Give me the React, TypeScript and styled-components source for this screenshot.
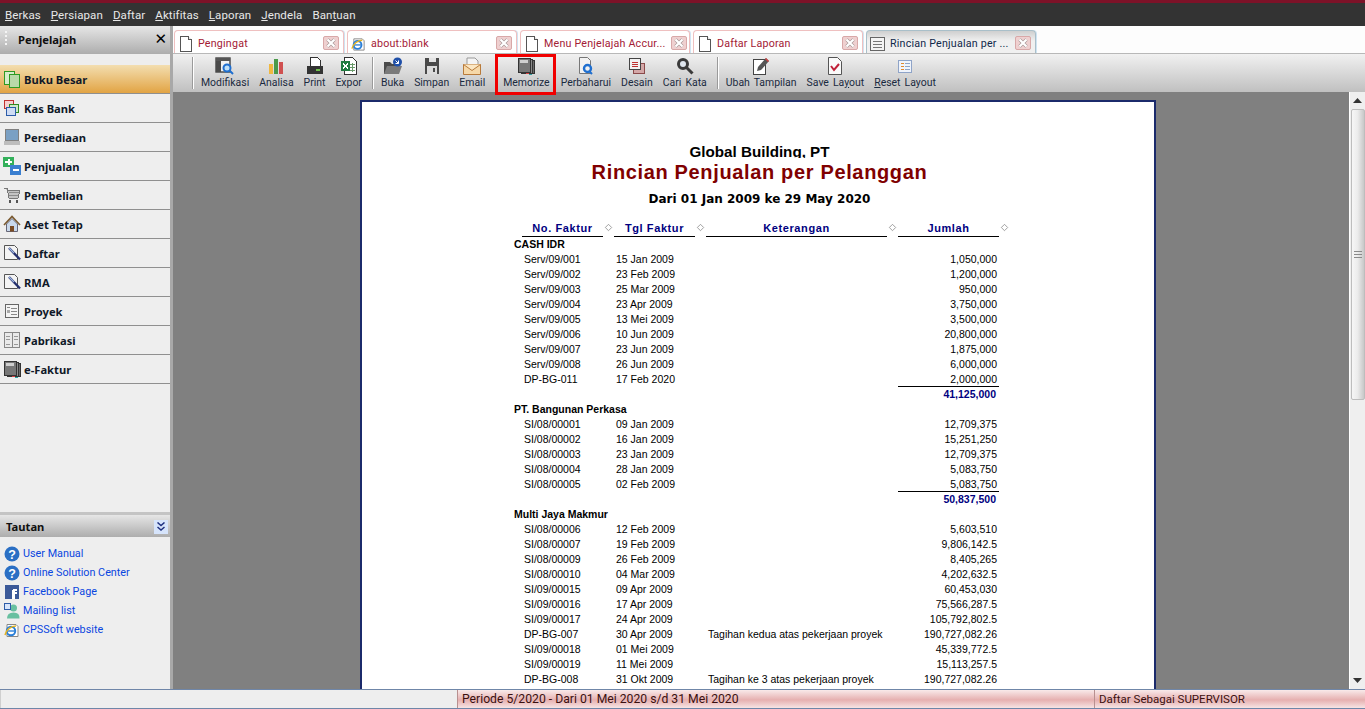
import React from 'react';
import styled, { createGlobalStyle } from 'styled-components';

const uiFont = `Roboto, "Noto Sans", sans-serif`;
const navFont = `"Noto Sans", "DejaVu Sans", sans-serif`;
const dateFont = `"DejaVu Sans", "Noto Sans", sans-serif`;
const reportFont = `"Liberation Sans", Arial, sans-serif`;

const GlobalStyle = createGlobalStyle`
    html, body, #root {
        margin: 0;
        height: 100%;
        overflow: hidden;
    }
    body {
        font-family: ${uiFont};
        font-size: 11px;
        background: #808080;
    }
`;

const AppFrame = styled.div`
    height: 709px;
    display: flex;
    flex-direction: column;
`;

const MenuBar = styled.div`
    height: 23px;
    flex: none;
    background: #333333;
    border-top: 3px solid #7d1228;
    display: flex;
    align-items: center;
    gap: 10px;
    padding-left: 5px;
`;

const MenuItem = styled.span`
    color: #e8e8e8;
    font-size: 11.5px;
    letter-spacing: 0.1px;
`;

const Body = styled.div`
    flex: 1;
    min-height: 0;
    display: flex;
`;

const Sidebar = styled.aside`
    width: 170px;
    flex: none;
    background: #eeeeee;
    border-right: 3px solid #a8a8a8;
    display: flex;
    flex-direction: column;
`;

const PanelHeader = styled.div`
    height: 28px;
    box-sizing: border-box;
    flex: none;
    background: linear-gradient(#e6e6e6, #adadad);
    display: flex;
    align-items: center;
    justify-content: space-between;
    padding: 0 3px 2px 5px;
    font-family: ${navFont};
    font-weight: bold;
    font-size: 11.2px;
    color: #101010;
`;

const Grip = styled.span`
    width: 2px;
    height: 16px;
    margin-right: 11px;
    background: repeating-linear-gradient(#f4f4f4 0 2px, transparent 2px 4px);
`;

const HeaderTitle = styled.span`
    flex: 1;
`;

const CloseGlyph = styled.span`
    font-size: 15px;
    font-family: "DejaVu Sans", sans-serif;
    font-weight: normal;
    line-height: 1;
    color: #000;
`;

const NavList = styled.nav`
    padding-top: 11px;
    flex: 1;
`;

const NavItem = styled.div<{ $active?: boolean }>`
    height: 28px;
    border-bottom: 1px solid #8f8f8f;
    background: ${(p) => (p.$active ? 'linear-gradient(#f3deb0, #e2a444)' : 'transparent')};
    display: flex;
    align-items: center;
    padding-left: 3px;
    gap: 3px;
    font-family: ${navFont};
    font-weight: bold;
    font-size: 11.2px;
    color: #101828;
`;

const IconSlot = styled.span`
    width: 18px;
    height: 18px;
    flex: none;
    display: flex;
    align-items: center;
    justify-content: center;
`;

const LinksHeader = styled(PanelHeader)`
    height: 25px;
    padding: 1px 2px 0 6px;
    border-top: 3px solid #c4c4c4;
`;

const CollapseButton = styled.span`
    width: 14px;
    height: 14px;
    background: #d6e4fb;
    display: flex;
    align-items: center;
    justify-content: center;
`;

const LinkList = styled.div`
    height: 145px;
    padding: 7px 0 0 3px;
    display: flex;
    flex-direction: column;
`;

const LinkRow = styled.a`
    height: 19px;
    display: flex;
    align-items: center;
    gap: 2px;
    font-size: 10.8px;
    color: #0a46e0;
`;

const Workspace = styled.main`
    flex: 1;
    min-width: 0;
    display: flex;
    flex-direction: column;
`;

const TabStrip = styled.div`
    height: 28px;
    flex: none;
    background: #fdfdfd;
    box-sizing: border-box;
    border-bottom: 1px solid #b8b8b8;
    padding: 4px 0 0 1px;
    display: flex;
    gap: 3px;
`;

const Tab = styled.div<{ $active?: boolean }>`
    width: 170px;
    box-sizing: border-box;
    border: 1px solid ${(p) => (p.$active ? '#a9bfc9' : '#efc0c0')};
    border-bottom: none;
    border-radius: 4px 4px 0 0;
    background: ${(p) => (p.$active ? 'linear-gradient(#cfcfcf, #f0f0f0 45%)' : '#ffffff')};
    box-shadow: 1px 0 0 #cfe3f2;
    display: flex;
    align-items: center;
    padding: 3px 4px 0 3px;
    gap: 5px;
`;

const TabIcon = styled.span`
    width: 15px;
    flex: none;
    display: flex;
    justify-content: center;
`;

const TabLabel = styled.span<{ $active?: boolean }>`
    flex: 1;
    font-size: 10.7px;
    letter-spacing: 0.2px;
    white-space: nowrap;
    color: ${(p) => (p.$active ? '#10284a' : '#a32035')};
`;

const TabClose = styled.span`
    width: 16px;
    height: 14px;
    flex: none;
    margin-top: -2px;
    box-sizing: border-box;
    border: 1px solid #d8a8a8;
    border-radius: 2px;
    background: #efd0d0;
    display: flex;
    align-items: center;
    justify-content: center;
`;

const Toolbar = styled.div`
    height: 38px;
    flex: none;
    background: linear-gradient(#f1f1f1, #c0c0c0);
    display: flex;
    align-items: flex-start;
    padding-left: 14px;
    position: relative;
    z-index: 1;
`;

const ToolSeparator = styled.span`
    width: 1px;
    height: 32px;
    margin: 3px 3px 0 5px;
    background: #9a9a9a;
    box-shadow: 1px 0 0 #fff;
`;

const ToolButton = styled.div<{ $marked?: boolean }>`
    height: ${(p) => (p.$marked ? '41px' : '38px')};
    box-sizing: border-box;
    padding: ${(p) => (p.$marked ? '0 3px 0 5px' : '3px 5px 0')};
    margin-left: ${(p) => (p.$marked ? '5px' : '0')};
    border: ${(p) => (p.$marked ? '3px solid #f00000' : 'none')};
    display: flex;
    flex-direction: column;
    align-items: center;
    white-space: nowrap;
    font-size: 10.45px;
    word-spacing: 1.5px;
    color: #1a2a40;
`;

const ToolIcon = styled.span`
    height: 18px;
    display: flex;
    align-items: center;
    justify-content: center;
`;

const ToolLabel = styled.span`
    line-height: 15px;
`;

const ReportArea = styled.div`
    flex: 1;
    min-height: 0;
    display: flex;
    background: #808080;
`;

const ReportScroll = styled.div`
    flex: 1;
    min-width: 0;
    overflow: hidden;
    padding: 8px 0 0 187px;
`;

const Page = styled.div`
    width: 796px;
    height: 700px;
    box-sizing: border-box;
    background: #ffffff;
    border: 2px solid #1b2a6b;
    padding: 41px 0 0 3px;
    font-family: ${reportFont};
    font-size: 10.5px;
    color: #000;
`;

const CompanyName = styled.div`
    height: 15px;
    overflow: hidden;
    text-align: center;
    font-size: 15.2px;
    line-height: 17px;
    font-weight: bold;
`;

const ReportTitle = styled.div`
    height: 28px;
    text-align: center;
    font-size: 20px;
    line-height: 28px;
    font-weight: bold;
    letter-spacing: 0.65px;
    color: #800000;
`;

const DateRange = styled.div`
    margin-top: 5px;
    height: 16px;
    text-align: center;
    font-family: ${dateFont};
    font-size: 12px;
    line-height: 16px;
    font-weight: bold;
`;

const ReportTable = styled.div`
    margin: 14px 0 0 157px;
    width: 500px;
`;

const HeaderRow = styled.div`
    display: grid;
    grid-template-columns: 92px 92px 192px 112px;
    height: 16px;
`;

const HeaderCell = styled.div`
    position: relative;
    margin-right: 11px;
    border-bottom: 1px solid #000;
    text-align: center;
    font-weight: bold;
    font-size: 11px;
    line-height: 14px;
    letter-spacing: 0.6px;
    color: #000080;
`;

const SortMark = styled.span`
    position: absolute;
    right: -9px;
    top: 3px;
    width: 5px;
    height: 5px;
    border: 1px solid #8a8a8a;
    transform: rotate(45deg) scale(0.75);
`;

const Row = styled.div`
    display: grid;
    grid-template-columns: 92px 92px 192px 101px;
    height: 15px;
    line-height: 15px;
    white-space: nowrap;
`;

const GroupRow = styled.div`
    height: 15px;
    line-height: 15px;
    margin-left: -8px;
    font-weight: bold;
`;

const Cell = styled.div`
    padding-left: 2px;
    margin-right: 9px;
    overflow: hidden;
`;

const Amount = styled.div`
    text-align: right;
    padding-right: 2px;
`;

const TotalAmount = styled(Amount)`
    grid-column: 4;
    padding-right: 3px;
    box-shadow: 0 -1px 0 #000;
    font-weight: bold;
    color: #000080;
`;

const Scrollbar = styled.div`
    width: 15px;
    flex: none;
    background: #efefef;
    border-left: 1px solid #ffffff;
    display: flex;
    flex-direction: column;
    align-items: center;
`;

const ScrollButton = styled.span<{ $down?: boolean }>`
    height: 17px;
    flex: none;
    display: flex;
    align-items: center;
    justify-content: center;
    order: ${(p) => (p.$down ? 3 : 0)};
`;

const ScrollThumb = styled.div`
    width: 14px;
    height: 291px;
    flex: none;
    box-sizing: border-box;
    border: 1px solid #bdbdbd;
    border-radius: 2px;
    background: linear-gradient(90deg, #f6f6f6, #ececec 45%, #c8c8c8);
    display: flex;
    align-items: center;
    justify-content: center;
`;

const ScrollTrack = styled.div`
    flex: 1;
    order: 2;
`;

const ThumbGrip = styled.span`
    width: 8px;
    height: 8px;
    background: repeating-linear-gradient(#8a8a8a 0 1px, transparent 1px 3px);
`;

const StatusBar = styled.footer`
    height: 20px;
    flex: none;
    box-sizing: border-box;
    border-top: 1px solid #6f86a8;
    border-bottom: 1px solid #6f86a8;
    display: grid;
    grid-template-columns: 457px 637px 1fr;
    line-height: 18px;
    color: #3a1010;
`;

const StatusCell = styled.div<{ $plain?: boolean; $small?: boolean }>`
    padding-left: 4px;
    white-space: nowrap;
    font-size: ${(p) => (p.$small ? '11.5px' : '12.2px')};
    background: ${(p) => (p.$plain ? '#eeeeee' : 'linear-gradient(#f9eaea, #e6b0b0 55%, #f7e4e4)')};
    border-left: 1px solid ${(p) => (p.$plain ? '#cfcfcf' : '#b89090')};
`;

const Svg: React.FC<{ w?: number; h?: number; children: React.ReactNode }> = ({ w = 18, h = 18, children }) => (
    <svg width={w} height={h} viewBox={`0 0 ${w} ${h}`} shapeRendering="crispEdges">
        {children}
    </svg>
);

const BlankDoc = () => (
    <Svg w={14} h={17}>
        <path d="M1.500 1.500h8l3 3v12h-11z" fill="#fff" stroke="#555" />
        <path d="M9.500 1.500v3h3" fill="#e8e8e8" stroke="#555" />
    </Svg>
);

const IeIcon = () => (
    <svg width="16" height="16" viewBox="0 0 16 16">
        <path d="M3 2.500h9l2 2v10H3z" fill="#fff" stroke="#888" />
        <circle cx="7" cy="9" r="4.200" fill="none" stroke="#2a7fd8" strokeWidth="2" />
        <path d="M3.500 9h7" stroke="#2a7fd8" strokeWidth="1.400" />
        <path d="M1 13C2 8 7 4 12 4" fill="none" stroke="#e6b422" strokeWidth="1.500" />
    </svg>
);

const ListDoc = () => (
    <Svg w={15} h={14}>
        <rect x="0.500" y="0.500" width="14" height="13" fill="#f4f4f4" stroke="#666" />
        <path d="M3 4.500h9M3 7.500h9M3 10.500h9" stroke="#777" />
    </Svg>
);

const PagesIcon = () => (
    <Svg>
        <rect x="1.500" y="1.500" width="10" height="13" fill="#d6eccb" stroke="#2e9a22" strokeWidth="1.200" />
        <rect x="6.500" y="4.500" width="10" height="13" fill="#b9d9a8" stroke="#2e9a22" strokeWidth="1.200" />
    </Svg>
);

const BankIcon = () => (
    <Svg>
        <rect x="1.500" y="1.500" width="9" height="8" fill="#f6d0d0" stroke="#c03030" />
        <rect x="6.500" y="5.500" width="9" height="8" fill="#cfe8c8" stroke="#2e8a22" />
        <rect x="3.500" y="8.500" width="9" height="8" fill="#cfdcf4" stroke="#2c5ca8" />
    </Svg>
);

const LaptopIcon = () => (
    <Svg>
        <rect x="2.500" y="1.500" width="13" height="11" fill="#7aa0c4" stroke="#808080" />
        <rect x="1" y="13" width="16" height="4" fill="#bdbdbd" />
    </Svg>
);

const PlusMinusIcon = () => (
    <Svg>
        <rect x="0" y="0" width="11" height="10" fill="#33b05a" />
        <path d="M2 4h7v2H2zM4.500 2h2v6h-2z" fill="#fff" />
        <rect x="7" y="8" width="11" height="10" fill="#3a7fd0" />
        <rect x="10" y="12" width="6" height="2" fill="#fff" />
    </Svg>
);

const CartIcon = () => (
    <Svg>
        <path d="M1 2h3l2 10h9l2-8H4" fill="#c4c4c4" stroke="#777" />
        <path d="M6 6h10M6 9h9" stroke="#8c8c8c" />
        <rect x="6" y="14" width="2" height="3" fill="#555" />
        <rect x="13" y="14" width="2" height="3" fill="#555" />
    </Svg>
);

const HouseIcon = () => (
    <svg width="18" height="18" viewBox="0 0 18 18">
        <path d="M3.500 9v7.500h11V9L9 3.500z" fill="#c9d8ea" stroke="#667" />
        <path d="M1 10l8-8.500 8 8.500" fill="none" stroke="#7a5a30" strokeWidth="1.600" />
        <rect x="7" y="11" width="4" height="5.500" fill="#7a4a22" />
    </svg>
);

const PenDocIcon = () => (
    <svg width="18" height="18" viewBox="0 0 18 18">
        <path d="M1.500 1.500h10l3 3v11h-13z" fill="#f4f4f4" stroke="#555" />
        <path d="M6 4l11 11.500" stroke="#24306e" strokeWidth="2.400" />
        <path d="M6 4l5 5" stroke="#9fb6e0" strokeWidth="1.200" />
    </svg>
);

const CardIcon = () => (
    <Svg>
        <rect x="2.500" y="2.500" width="13" height="13" fill="#f4f4f4" stroke="#666" />
        <rect x="4" y="8" width="3" height="3" fill="#aaa" />
        <path d="M8 6h6M8 9h6M8 12h6" stroke="#888" />
        <path d="M4 5h3" stroke="#888" />
    </Svg>
);

const BookIcon = () => (
    <Svg>
        <rect x="1.500" y="1.500" width="15" height="15" fill="#eaeaea" stroke="#888" />
        <path d="M9 1.500v15" stroke="#888" />
        <path d="M3 5h4M3 8h4M3 13h4M11 5h4M11 8h4M11 13h4" stroke="#999" />
    </Svg>
);

const StackIcon: React.FC = () => (
    <Svg>
        <rect x="7" y="3" width="10" height="13" fill="#6a6a6a" stroke="#333" />
        <rect x="4" y="2" width="11" height="14" fill="#8a8a8a" stroke="#333" />
        <rect x="1" y="1" width="12" height="14" fill="#777" stroke="#333" />
        <rect x="3" y="3" width="8" height="3" fill="#cfcfcf" />
        <path d="M9 16h3" stroke="#d04040" />
        <path d="M12 17h3" stroke="#30a0a0" />
    </Svg>
);

const HelpIcon = () => (
    <svg width="16" height="16" viewBox="0 0 16 16">
        <circle cx="8" cy="8" r="7.500" fill="#2a6fc4" />
        <text x="8" y="12.500" textAnchor="middle" fontFamily="Liberation Sans" fontWeight="bold" fontSize="12.500" fill="#fff">?</text>
    </svg>
);

const FacebookIcon = () => (
    <Svg w={16} h={16}>
        <rect x="1" y="1" width="14" height="14" fill="#3b5998" />
        <path d="M8 15V7.500q0-3 3-3h2v2h-1.500q-1 0-1 1V8h2.500v2H10.500v5z" fill="#fff" />
    </Svg>
);

const PersonIcon = () => (
    <svg width="16" height="16" viewBox="0 0 16 16">
        <circle cx="9.500" cy="5" r="3.500" fill="#68c0a0" />
        <path d="M3 15.500q0-6 6.500-6t6 6z" fill="#68c0a0" />
        <rect x="0.500" y="0.500" width="6" height="6" fill="#d6e4fb" stroke="#2c5ca8" />
    </svg>
);

const DoubleChevron = () => (
    <svg width="10" height="10" viewBox="0 0 10 10">
        <path d="M1.500 0.500l3.500 3 3.500-3M1.500 5l3.500 3 3.500-3" fill="none" stroke="#1e3080" strokeWidth="1.500" />
    </svg>
);

const TabX = () => (
    <svg width="10" height="10" viewBox="0 0 10 10">
        <path d="M1.500 1.500l7 7M8.500 1.500l-7 7" stroke="#a89898" strokeWidth="3.400" />
        <path d="M1.500 1.500l7 7M8.500 1.500l-7 7" stroke="#fff" strokeWidth="2.200" />
    </svg>
);

const ModifyIcon = () => (
    <svg width="20" height="18" viewBox="0 0 20 18">
        <rect x="1" y="1" width="14" height="14" fill="#f2f2f2" stroke="#444" strokeWidth="1.400" />
        <rect x="1" y="1" width="5" height="14" fill="#4a4a4a" />
        <rect x="1" y="1" width="14" height="3" fill="#555" />
        <circle cx="12" cy="11" r="3.500" fill="#bfe0f8" stroke="#1f6fd0" strokeWidth="2" />
        <path d="M15 14l3 3" stroke="#1f6fd0" strokeWidth="2" />
    </svg>
);

const ChartIcon = () => (
    <Svg>
        <rect x="2" y="7" width="4" height="10" fill="#f0b840" />
        <rect x="7" y="2" width="4" height="15" fill="#4a9a4a" />
        <rect x="12" y="5" width="4" height="12" fill="#d05050" />
    </Svg>
);

const PrinterIcon = () => (
    <Svg>
        <path d="M4.500 0.500h7l2.500 2.500v6h-9.500z" fill="#fff" stroke="#333" />
        <rect x="1" y="9" width="16" height="8" fill="#333" />
        <rect x="10" y="12" width="4" height="2" fill="#6fc04a" />
    </Svg>
);

const ExcelIcon = () => (
    <Svg>
        <path d="M4.500 0.500h8l4 4v13h-12z" fill="#fff" stroke="#333" />
        <path d="M10 7h5M10 10h5M10 13h5M12.500 6v9" stroke="#6a9a6a" />
        <rect x="1" y="4" width="9" height="10" fill="#1f7a3f" />
        <path d="M3 6l5 6M8 6l-5 6" stroke="#fff" strokeWidth="1.200" />
    </Svg>
);

const FolderIcon = () => (
    <svg width="20" height="18" viewBox="0 0 20 18">
        <path d="M1 5h6l2 2h6v10H1z" fill="#4a4a4a" />
        <path d="M4 9h15l-3 8H1z" fill="#7a7a7a" />
        <circle cx="14.500" cy="5" r="4.500" fill="#1f4fa8" />
        <path d="M12.500 3.500l3 3M15.500 3.500v3h-3" stroke="#fff" fill="none" />
    </svg>
);

const SaveIcon = () => (
    <Svg>
        <rect x="2" y="1" width="14" height="16" fill="#4a4a4a" />
        <rect x="6" y="1" width="7" height="4" fill="#e4e4e4" />
        <rect x="4" y="9" width="10" height="8" fill="#dcdcdc" />
        <rect x="10" y="11" width="2" height="4" fill="#4a4a4a" />
    </Svg>
);

const MailIcon = () => (
    <svg width="20" height="18" viewBox="0 0 20 18">
        <path d="M5 8V1h8l3 3v4z" fill="#f4f4f4" stroke="#999" />
        <path d="M1.500 7.500h17v10h-17z" fill="#f6d8a8" stroke="#b87a3a" />
        <path d="M1.500 7.500l8.500 6 8.500-6" fill="#fbe7c4" stroke="#b87a3a" />
    </svg>
);

const RefreshDocIcon = () => (
    <svg width="18" height="18" viewBox="0 0 18 18">
        <path d="M2.500 0.500h8l3 3v13h-11z" fill="#f2f2f2" stroke="#777" />
        <circle cx="10.500" cy="11.500" r="3.500" fill="none" stroke="#1f6fd0" strokeWidth="2.400" />
        <path d="M12 14l3 3" stroke="#1f6fd0" strokeWidth="2" />
    </svg>
);

const DesignIcon = () => (
    <Svg>
        <rect x="5.500" y="6.500" width="11" height="10" fill="#d4a8a8" stroke="#8a4a4a" />
        <rect x="1.500" y="1.500" width="11" height="11" fill="#f2f2f2" stroke="#444" />
        <path d="M4 5h6M4 7h6M4 9h6" stroke="#c03030" />
    </Svg>
);

const SearchIcon = () => (
    <svg width="18" height="18" viewBox="0 0 18 18">
        <circle cx="7" cy="7" r="4.500" fill="#dfe6ee" stroke="#3a3a3a" strokeWidth="3" />
        <path d="M10.500 10.500l6 6" stroke="#3a3a3a" strokeWidth="3" />
    </svg>
);

const EditViewIcon = () => (
    <svg width="18" height="18" viewBox="0 0 18 18">
        <rect x="1.500" y="2.500" width="12" height="15" fill="#fff" stroke="#444" />
        <path d="M5 14l1-4 8-9 3 3-8 9z" fill="#555" />
        <path d="M14 1l3 3-1 1-3-3z" fill="#d04040" />
    </svg>
);

const CheckDocIcon = () => (
    <svg width="18" height="18" viewBox="0 0 18 18">
        <path d="M2.500 0.500h9l4 4v13h-13z" fill="#fafafa" stroke="#555" />
        <path d="M5 9l3 4 5-6" fill="none" stroke="#c02038" strokeWidth="2" />
    </svg>
);

const FormIcon = () => (
    <Svg>
        <rect x="2.500" y="3.500" width="13" height="12" fill="#f0f4fb" stroke="#8fa4c8" />
        <path d="M5 6h3M5 9h3M5 12h3" stroke="#e08a30" />
        <path d="M9 6h5M9 9h5M9 12h5" stroke="#8fa4c8" />
    </Svg>
);

const ArrowUp = () => (
    <svg width="9" height="5" viewBox="0 0 9 5">
        <path d="M4.500 0L9 5H0z" fill="#333" />
    </svg>
);

const ArrowDown = () => (
    <svg width="9" height="5" viewBox="0 0 9 5">
        <path d="M0 0h9L4.500 5z" fill="#333" />
    </svg>
);

const menus: [string, string, string][] = [
    ['', 'B', 'erkas'],
    ['', 'P', 'ersiapan'],
    ['', 'D', 'aftar'],
    ['', 'A', 'ktifitas'],
    ['', 'L', 'aporan'],
    ['', 'J', 'endela'],
    ['Ban', 't', 'uan'],
];

const navItems: { label: string; icon: React.ReactNode; active?: boolean }[] = [
    { label: 'Buku Besar', icon: <PagesIcon />, active: true },
    { label: 'Kas Bank', icon: <BankIcon /> },
    { label: 'Persediaan', icon: <LaptopIcon /> },
    { label: 'Penjualan', icon: <PlusMinusIcon /> },
    { label: 'Pembelian', icon: <CartIcon /> },
    { label: 'Aset Tetap', icon: <HouseIcon /> },
    { label: 'Daftar', icon: <PenDocIcon /> },
    { label: 'RMA', icon: <PenDocIcon /> },
    { label: 'Proyek', icon: <CardIcon /> },
    { label: 'Pabrikasi', icon: <BookIcon /> },
    { label: 'e-Faktur', icon: <StackIcon /> },
];

const links: { label: string; icon: React.ReactNode }[] = [
    { label: 'User Manual', icon: <HelpIcon /> },
    { label: 'Online Solution Center', icon: <HelpIcon /> },
    { label: 'Facebook Page', icon: <FacebookIcon /> },
    { label: 'Mailing list', icon: <PersonIcon /> },
    { label: 'CPSSoft website', icon: <IeIcon /> },
];

const tabs: { label: string; icon: React.ReactNode; active?: boolean }[] = [
    { label: 'Pengingat', icon: <BlankDoc /> },
    { label: 'about:blank', icon: <IeIcon /> },
    { label: 'Menu Penjelajah Accur...', icon: <BlankDoc /> },
    { label: 'Daftar Laporan', icon: <BlankDoc /> },
    { label: 'Rincian Penjualan per ...', icon: <ListDoc />, active: true },
];

type Tool = { label: React.ReactNode; icon: React.ReactNode; marked?: boolean };

const toolGroups: Tool[][] = [
    [
        { label: 'Modifikasi', icon: <ModifyIcon /> },
        { label: 'Analisa', icon: <ChartIcon /> },
        { label: 'Print', icon: <PrinterIcon /> },
        { label: 'Expor', icon: <ExcelIcon /> },
    ],
    [
        { label: 'Buka', icon: <FolderIcon /> },
        { label: 'Simpan', icon: <SaveIcon /> },
        { label: 'Email', icon: <MailIcon /> },
        { label: 'Memorize', icon: <StackIcon />, marked: true },
        { label: 'Perbaharui', icon: <RefreshDocIcon /> },
        { label: 'Desain', icon: <DesignIcon /> },
        { label: 'Cari Kata', icon: <SearchIcon /> },
    ],
    [
        { label: 'Ubah Tampilan', icon: <EditViewIcon /> },
        { label: <>Save La<u>y</u>out</>, icon: <CheckDocIcon /> },
        { label: <><u>R</u>eset Layout</>, icon: <FormIcon /> },
    ],
];

type ReportGroup = { name: string; rows: [string, string, string, string][]; total?: string };

const reportGroups: ReportGroup[] = [
    {
        name: 'CASH IDR',
        rows: [
            ['Serv/09/001', '15 Jan 2009', '', '1,050,000'],
            ['Serv/09/002', '23 Feb 2009', '', '1,200,000'],
            ['Serv/09/003', '25 Mar 2009', '', '950,000'],
            ['Serv/09/004', '23 Apr 2009', '', '3,750,000'],
            ['Serv/09/005', '13 Mei 2009', '', '3,500,000'],
            ['Serv/09/006', '10 Jun 2009', '', '20,800,000'],
            ['Serv/09/007', '23 Jun 2009', '', '1,875,000'],
            ['Serv/09/008', '26 Jun 2009', '', '6,000,000'],
            ['DP-BG-011', '17 Feb 2020', '', '2,000,000'],
        ],
        total: '41,125,000',
    },
    {
        name: 'PT. Bangunan Perkasa',
        rows: [
            ['SI/08/00001', '09 Jan 2009', '', '12,709,375'],
            ['SI/08/00002', '16 Jan 2009', '', '15,251,250'],
            ['SI/08/00003', '23 Jan 2009', '', '12,709,375'],
            ['SI/08/00004', '28 Jan 2009', '', '5,083,750'],
            ['SI/08/00005', '02 Feb 2009', '', '5,083,750'],
        ],
        total: '50,837,500',
    },
    {
        name: 'Multi Jaya Makmur',
        rows: [
            ['SI/08/00006', '12 Feb 2009', '', '5,603,510'],
            ['SI/08/00007', '19 Feb 2009', '', '9,806,142.5'],
            ['SI/08/00009', '26 Feb 2009', '', '8,405,265'],
            ['SI/08/00010', '04 Mar 2009', '', '4,202,632.5'],
            ['SI/09/00015', '09 Apr 2009', '', '60,453,030'],
            ['SI/09/00016', '17 Apr 2009', '', '75,566,287.5'],
            ['SI/09/00017', '24 Apr 2009', '', '105,792,802.5'],
            ['DP-BG-007', '30 Apr 2009', 'Tagihan kedua atas pekerjaan proyek', '190,727,082.26'],
            ['SI/09/00018', '01 Mei 2009', '', '45,339,772.5'],
            ['SI/09/00019', '11 Mei 2009', '', '15,113,257.5'],
            ['DP-BG-008', '31 Okt 2009', 'Tagihan ke 3 atas pekerjaan proyek', '190,727,082.26'],
        ],
    },
];

const columns = ['No. Faktur', 'Tgl Faktur', 'Keterangan', 'Jumlah'];

const App: React.FC = () => {
    return (
        <>
            <GlobalStyle />
            <AppFrame>
                <MenuBar>
                    {menus.map(([before, key, after]) => (
                        <MenuItem key={key + after}>
                            {before}<u>{key}</u>{after}
                        </MenuItem>
                    ))}
                </MenuBar>
                <Body>
                    <Sidebar>
                        <PanelHeader>
                            <Grip />
                            <HeaderTitle>Penjelajah</HeaderTitle>
                            <CloseGlyph>✕</CloseGlyph>
                        </PanelHeader>
                        <NavList>
                            {navItems.map((item) => (
                                <NavItem key={item.label} $active={item.active}>
                                    <IconSlot>{item.icon}</IconSlot>
                                    {item.label}
                                </NavItem>
                            ))}
                        </NavList>
                        <LinksHeader>
                            Tautan
                            <CollapseButton><DoubleChevron /></CollapseButton>
                        </LinksHeader>
                        <LinkList>
                            {links.map((link) => (
                                <LinkRow key={link.label}>
                                    <IconSlot>{link.icon}</IconSlot>
                                    {link.label}
                                </LinkRow>
                            ))}
                        </LinkList>
                    </Sidebar>
                    <Workspace>
                        <TabStrip>
                            {tabs.map((tab) => (
                                <Tab key={tab.label} $active={tab.active}>
                                    <TabIcon>{tab.icon}</TabIcon>
                                    <TabLabel $active={tab.active}>{tab.label}</TabLabel>
                                    <TabClose><TabX /></TabClose>
                                </Tab>
                            ))}
                        </TabStrip>
                        <Toolbar>
                            {toolGroups.map((group, i) => (
                                <React.Fragment key={i}>
                                    <ToolSeparator />
                                    {group.map((tool, j) => (
                                        <ToolButton key={j} $marked={tool.marked}>
                                            <ToolIcon>{tool.icon}</ToolIcon>
                                            <ToolLabel>{tool.label}</ToolLabel>
                                        </ToolButton>
                                    ))}
                                </React.Fragment>
                            ))}
                        </Toolbar>
                        <ReportArea>
                            <ReportScroll>
                                <Page>
                                    <CompanyName>Global Building, PT</CompanyName>
                                    <ReportTitle>Rincian Penjualan per Pelanggan</ReportTitle>
                                    <DateRange>Dari 01 Jan 2009 ke 29 May 2020</DateRange>
                                    <ReportTable>
                                        <HeaderRow>
                                            {columns.map((col) => (
                                                <HeaderCell key={col}>
                                                    {col}
                                                    <SortMark />
                                                </HeaderCell>
                                            ))}
                                        </HeaderRow>
                                        {reportGroups.map((group) => (
                                            <div key={group.name}>
                                                <GroupRow>{group.name}</GroupRow>
                                                {group.rows.map(([no, date, note, amount]) => (
                                                    <Row key={no}>
                                                        <Cell>{no}</Cell>
                                                        <Cell>{date}</Cell>
                                                        <Cell>{note}</Cell>
                                                        <Amount>{amount}</Amount>
                                                    </Row>
                                                ))}
                                                {group.total && (
                                                    <Row>
                                                        <TotalAmount>{group.total}</TotalAmount>
                                                    </Row>
                                                )}
                                            </div>
                                        ))}
                                    </ReportTable>
                                </Page>
                            </ReportScroll>
                            <Scrollbar>
                                <ScrollButton><ArrowUp /></ScrollButton>
                                <ScrollThumb><ThumbGrip /></ScrollThumb>
                                <ScrollTrack />
                                <ScrollButton $down><ArrowDown /></ScrollButton>
                            </Scrollbar>
                        </ReportArea>
                    </Workspace>
                </Body>
                <StatusBar>
                    <StatusCell $plain />
                    <StatusCell>Periode 5/2020 - Dari 01 Mei 2020 s/d 31 Mei 2020</StatusCell>
                    <StatusCell $small>Daftar Sebagai SUPERVISOR</StatusCell>
                </StatusBar>
            </AppFrame>
        </>
    );
};

export default App;
